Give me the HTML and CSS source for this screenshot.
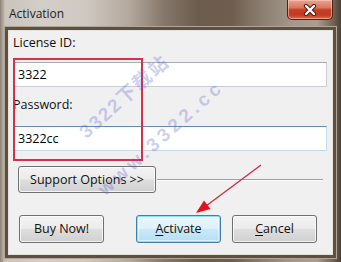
FILE: index.html
```html
<!DOCTYPE html>
<html>
<head>
<meta charset="utf-8">
<title>Activation</title>
<link rel="stylesheet" href="styles.css">
</head>
<body>
<div class="window">
  <div class="titlebar">
    <span class="title">Activation</span>
    <button class="close" aria-label="Close">
      <svg width="14" height="12" viewBox="0 0 14 12">
        <path d="M3 2 L11 10 M11 2 L3 10" stroke="#4a1a10" stroke-width="4.2" stroke-linecap="round"/>
        <path d="M3 2 L11 10 M11 2 L3 10" stroke="#ffffff" stroke-width="2.4" stroke-linecap="round"/>
      </svg>
    </button>
  </div>
  <div class="client">
    <label class="lbl">License ID:</label>
    <div class="textbox">3322</div>
    <label class="lbl lbl2">Password:</label>
    <div class="textbox focus">3322cc</div>
    <div class="support-row">
      <button class="btn support">Support Options &gt;&gt;</button>
      <div class="sep"></div>
    </div>
    <div class="actions">
      <button class="btn">Buy Now!</button>
      <div class="right">
        <button class="btn default"><u>A</u>ctivate</button>
        <button class="btn"><u>C</u>ancel</button>
      </div>
    </div>
  </div>
  <div class="redbox"></div>
  <svg class="arrow" width="341" height="262" viewBox="0 0 341 262">
    <line x1="261" y1="165" x2="206" y2="206" stroke="#d4283c" stroke-width="1.3"/>
    <polygon points="196,213 210.5,209 204,200.5" fill="#e0121e"/>
  </svg>
  <span class="wm wm1">3322下载站</span>
  <span class="wm wm2">www.3322.cc</span>
</div>
</body>
</html>
```
FILE: styles.css
```css
html, body {
  margin: 0;
  padding: 0;
}
body {
  width: 341px;
  height: 262px;
  overflow: hidden;
  font-family: "Open Sans", "Noto Sans", sans-serif;
  font-size: 12px;
  color: #1a1a1a;
}
.window {
  position: relative;
  width: 341px;
  height: 262px;
  display: flex;
  flex-direction: column;
  background: linear-gradient(90deg, #8d8176 0, #c9c3bb 1.5%, #d3cec8 12%, #cfc9c1 25%, #b3a89c 38%, #85776a 48%, #6c5c4d 58%, #6f5e4e 68%, #8f8274 78%, #a3988b 86%, #a89d90 93%, #6d5f51 98%, #4b3f33 100%);
  overflow: hidden;
}
.titlebar {
  height: 30px;
  flex: none;
  display: flex;
  justify-content: space-between;
  align-items: flex-start;
}
.title {
  padding: 6px 0 0 9px;
  font-size: 12px;
  line-height: 16px;
  color: #1e1e1e;
}
.close {
  width: 46px;
  height: 20px;
  margin-right: 8px;
  padding: 0;
  border: 1px solid #4a2418;
  border-top: none;
  border-radius: 0 0 5px 5px;
  background: linear-gradient(180deg, #e7a594 0%, #d8775f 40%, #c63d22 52%, #c23b20 78%, #d9694a 100%);
  box-shadow: inset 0 0 0 1px rgba(255, 210, 190, 0.55);
  display: flex;
  align-items: center;
  justify-content: center;
}
.client {
  flex: 1;
  margin: 0 8px 7px 8px;
  background: #f0f0f0;
  border: 1px solid #e6e2dc;
  box-shadow: 0 0 0 3px #5e4f41, 0 0 0 4px #b0a698;
  padding: 4px 5px 0 4px;
  display: flex;
  flex-direction: column;
}
.lbl {
  display: block;
  line-height: 16px;
  font-size: 12.5px;
  color: #111;
}
.textbox {
  margin-top: 11px;
  height: 25px;
  box-sizing: border-box;
  background: #fff;
  border: 1px solid #c9ccd2;
  border-top-color: #a9acb2;
  padding: 3px 0 0 4px;
  font-size: 12.5px;
  line-height: 17px;
  color: #000;
}
.textbox.focus {
  border-color: #c5dbec;
  border-top-color: #5f8fb5;
  margin-top: 13px;
}
.lbl2 {
  margin-top: 10px;
}
.support-row {
  margin-top: 15px;
  display: flex;
  align-items: center;
  padding-left: 5px;
  padding-right: 4px;
}
.btn {
  font-family: "Open Sans", "Noto Sans", sans-serif;
  font-size: 12.5px;
  color: #111;
  padding: 0;
  border: 1px solid #707070;
  border-radius: 3px;
  background: linear-gradient(180deg, #f3f3f3 0%, #ebebeb 48%, #dedede 52%, #d0d0d0 100%);
  box-shadow: inset 0 0 0 1px rgba(255, 255, 255, 0.75);
  width: 85px;
  height: 28px;
  line-height: 18px;
}
.btn.support {
  width: 138px;
  height: 27px;
}
.sep {
  flex: 1;
  height: 0;
  border-top: 1px solid #a0a0a0;
  border-bottom: 1px solid #ffffff;
  margin-left: 1px;
}
.actions {
  margin-top: 22px;
  display: flex;
  justify-content: space-between;
  padding-left: 6px;
  padding-right: 10px;
}
.right {
  display: flex;
  gap: 11px;
}
.btn.default {
  border-color: #3c7fb1;
  background: linear-gradient(180deg, #ecf7fd 0%, #def1fb 48%, #c8e9fb 52%, #b5def4 100%);
  box-shadow: inset 0 0 0 1px #8ee0f8, inset 0 0 0 2px rgba(255, 255, 255, 0.5);
}
.btn u {
  text-decoration-thickness: 1px;
  text-underline-offset: 2px;
}
.redbox {
  position: absolute;
  left: 13px;
  top: 58px;
  width: 126px;
  height: 99px;
  border: 2px solid #d6304d;
}
.arrow {
  position: absolute;
  left: 0;
  top: 0;
  pointer-events: none;
}
.wm {
  position: absolute;
  font-family: "Liberation Sans", "Noto Sans CJK SC", sans-serif;
  font-weight: bold;
  font-size: 19px;
  letter-spacing: 2px;
  color: rgba(80, 92, 205, 0.3);
  white-space: nowrap;
  transform: translate(-50%, -50%) rotate(-42deg);
  pointer-events: none;
}
.wm1 {
  left: 123px;
  top: 95px;
}
.wm2 {
  left: 161px;
  top: 138px;
  letter-spacing: 4px;
}
```
